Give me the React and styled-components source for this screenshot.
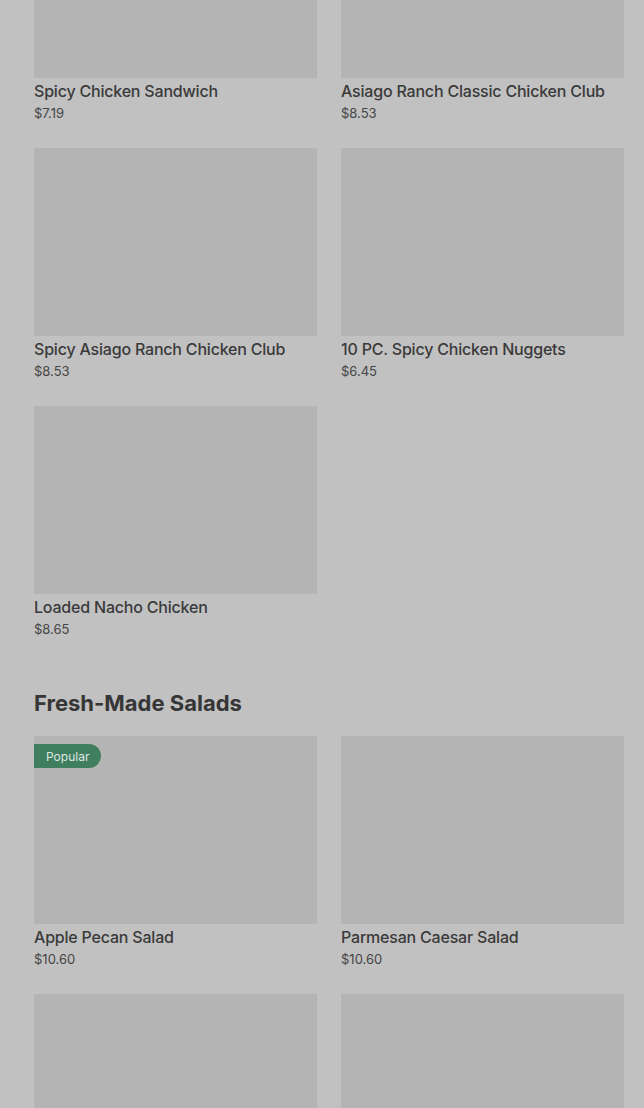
import React from "react";
import styled, { createGlobalStyle } from "styled-components";

const Global = createGlobalStyle`
  html, body {
    margin: 0;
    padding: 0;
    background: #c1c1c1;
    font-family: "Inter", "Liberation Sans", sans-serif;
    overflow: hidden;
  }
`;

const Page = styled.div`
  width: 644px;
  height: 1108px;
  overflow: hidden;
  background: #c1c1c1;
`;

const Content = styled.div`
  margin-top: -110px;
  padding: 0 20px 0 34px;
`;

const Section = styled.section`
  display: flex;
  flex-direction: column;
`;

const Heading = styled.h2`
  margin: 50px 0 19px;
  font-size: 22px;
  line-height: 28px;
  font-weight: 700;
  color: #363636;
`;

const Grid = styled.div`
  display: grid;
  grid-template-columns: 283px 283px;
  column-gap: 24px;
  row-gap: 25px;
`;

const Card = styled.div`
  display: flex;
  flex-direction: column;
`;

const Thumb = styled.div`
  position: relative;
  height: 188px;
  background: #b4b4b4;
`;

const Badge = styled.span`
  position: absolute;
  top: 8px;
  left: 0;
  height: 24px;
  padding: 0 12px;
  display: flex;
  align-items: center;
  background: #3f7f5f;
  color: #dfe6e2;
  font-size: 12px;
  border-radius: 0 12px 12px 0;
`;

const Title = styled.div`
  margin-top: 2px;
  font-size: 16px;
  line-height: 22px;
  font-weight: 500;
  letter-spacing: -0.2px;
  color: #3a3a3a;
`;

const Price = styled.div`
  margin-top: 1px;
  font-size: 13px;
  line-height: 20px;
  color: #454545;
`;

const sandwiches = [
  { name: "Spicy Chicken Sandwich", price: "$7.19" },
  { name: "Asiago Ranch Classic Chicken Club", price: "$8.53" },
  { name: "Spicy Asiago Ranch Chicken Club", price: "$8.53" },
  { name: "10 PC. Spicy Chicken Nuggets", price: "$6.45" },
  { name: "Loaded Nacho Chicken", price: "$8.65" },
];

const salads = [
  { name: "Apple Pecan Salad", price: "$10.60", popular: true },
  { name: "Parmesan Caesar Salad", price: "$10.60" },
  { name: "", price: "" },
  { name: "", price: "" },
];

const Item = ({ item }) => (
  <Card>
    <Thumb>{item.popular && <Badge>Popular</Badge>}</Thumb>
    {item.name && <Title>{item.name}</Title>}
    {item.price && <Price>{item.price}</Price>}
  </Card>
);

export default function App() {
  return (
    <Page>
      <Global />
      <Content>
        <Section>
          <Grid>
            {sandwiches.map((s, i) => (
              <Item key={i} item={s} />
            ))}
          </Grid>
        </Section>
        <Section>
          <Heading>Fresh-Made Salads</Heading>
          <Grid>
            {salads.map((s, i) => (
              <Item key={i} item={s} />
            ))}
          </Grid>
        </Section>
      </Content>
    </Page>
  );
}
